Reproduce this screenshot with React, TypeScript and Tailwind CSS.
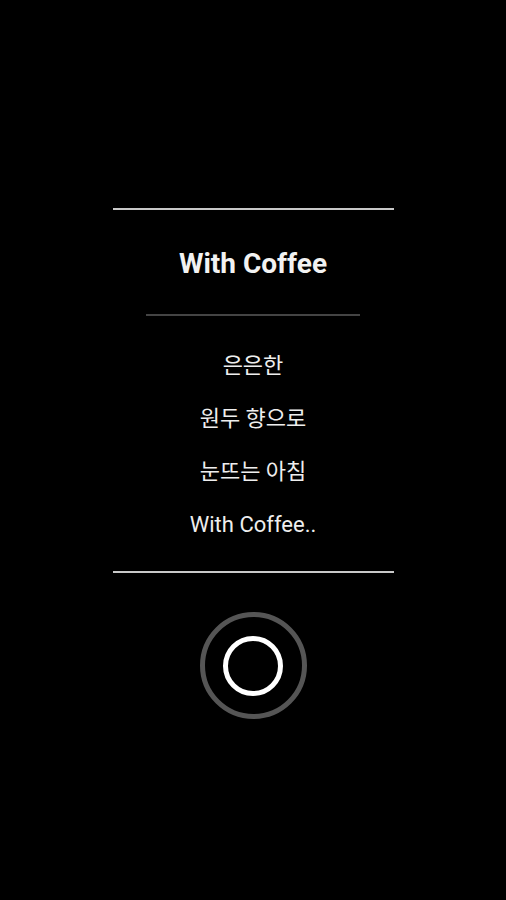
import React from "react";

export default function App() {
  const lines = ["은은한", "원두 향으로", "눈뜨는 아침", "With Coffee.."];
  return (
    <div
      className="w-[506px] h-[900px] bg-black flex flex-col items-center"
      style={{ fontFamily: 'Roboto, "Noto Sans CJK KR", sans-serif' }}
    >
      <div className="w-[281px] mt-[208px] flex flex-col">
        <div className="h-[2px] bg-[#c8c8c8]" />
        <div className="h-[104px] flex items-center justify-center text-[28px] font-bold text-[#f2f2f2] pt-[4px]">
          With Coffee
        </div>
        <div className="w-[214px] h-[2px] bg-[#444444] mx-auto" />
        <div className="pt-[23px] pb-[20px] flex flex-col items-center text-[22px] text-[#eeeeee]">
          {lines.map((l) => (
            <div key={l} className="leading-[53px] h-[53px]">
              {l}
            </div>
          ))}
        </div>
        <div className="h-[2px] bg-[#c8c8c8]" />
      </div>
      <div className="mt-[39px] w-[107px] h-[107px] rounded-full border-[5px] border-[#555555] flex items-center justify-center">
        <div className="w-[60px] h-[60px] rounded-full border-[5px] border-white" />
      </div>
    </div>
  );
}
